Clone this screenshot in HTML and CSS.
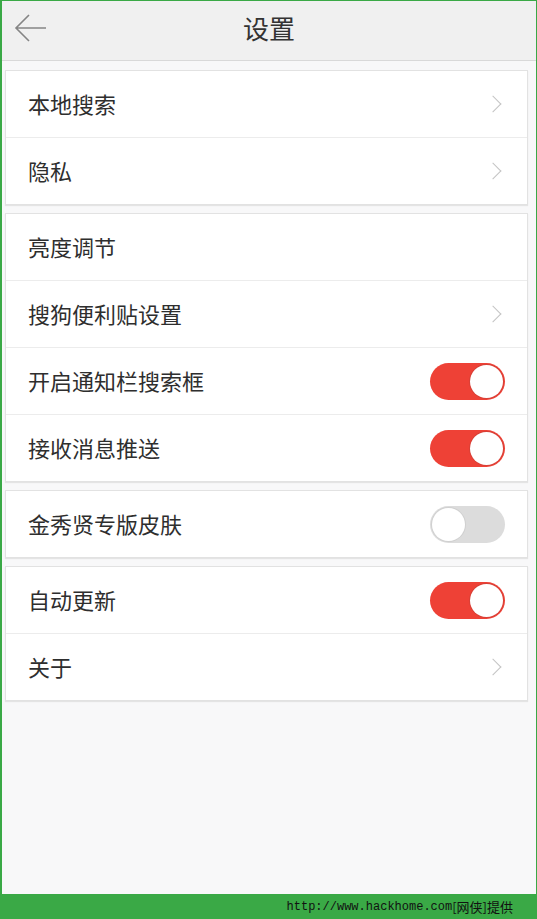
FILE: index.html
```html
<!doctype html>
<html lang="zh">
<head>
    <meta charset="utf-8">
    <meta name="viewport" content="width=device-width, initial-scale=1">
    <title>设置</title>
    <link rel="stylesheet" href="styles.css">
</head>
<body>
    <div class="screen">
        <div class="header">
            <svg class="back" width="34" height="30" viewBox="0 0 34 30">
                <path d="M33 15H3M16 2L3 15l13 13" fill="none" stroke="#858585" stroke-width="1.6"/>
            </svg>
            <h1>设置</h1>
        </div>

        <div class="content">
            <div class="card">
                <div class="row"><span>本地搜索</span><i class="chevron"></i></div>
                <div class="row"><span>隐私</span><i class="chevron"></i></div>
            </div>
            <div class="card">
                <div class="row"><span>亮度调节</span></div>
                <div class="row"><span>搜狗便利贴设置</span><i class="chevron"></i></div>
                <div class="row"><span>开启通知栏搜索框</span><i class="switch on"></i></div>
                <div class="row"><span>接收消息推送</span><i class="switch on"></i></div>
            </div>
            <div class="card">
                <div class="row"><span>金秀贤专版皮肤</span><i class="switch"></i></div>
            </div>
            <div class="card">
                <div class="row"><span>自动更新</span><i class="switch on"></i></div>
                <div class="row"><span>关于</span><i class="chevron"></i></div>
            </div>
        </div>
    </div>
    <div class="footer"><span class="url">http://www.hackhome.com</span><span>[网侠]提供</span></div>
</body>
</html>
```

FILE: styles.css
```css
* {
    margin: 0;
    padding: 0;
    box-sizing: border-box;
}

body {
    width: 537px;
    height: 919px;
    background-color: #3aa946;
    font-family: "Noto Sans CJK SC", "Noto Sans", sans-serif;
    overflow: hidden;
}

.screen {
    height: 894px;
    border: 1px solid #3aa946;
    border-left-width: 2px;
    border-bottom: none;
    background-color: #f8f8f9;
    display: flex;
    flex-direction: column;
}

.header {
    height: 60px;
    flex-shrink: 0;
    display: flex;
    align-items: center;
    position: relative;
    background-color: #f0f0f0;
    border-bottom: 1px solid #d9d9d9;
}

.back {
    margin-left: 11px;
    margin-top: -6px;
}

.header h1 {
    position: absolute;
    left: 0;
    right: 0;
    top: 10px;
    text-align: center;
    font-size: 26px;
    font-weight: normal;
    color: #333;
    line-height: 34px;
}

.content {
    flex: 1;
    padding: 9px 8px 0 3px;
}

.card {
    background-color: #fff;
    border: 1px solid #e2e2e2;
    box-shadow: 0 1px 1px #e4e4e4;
    margin-bottom: 8px;
}

.row {
    height: 67px;
    display: flex;
    align-items: center;
    justify-content: space-between;
    padding: 0 22px 0 22px;
    border-top: 1px solid #ececec;
    font-size: 22px;
    color: #2e2e2e;
}

.row span {
    margin-top: -3px;
}

.row:first-child {
    height: 66px;
    border-top: none;
}

.chevron {
    width: 12px;
    height: 12px;
    border-top: 1.5px solid #c4c4c4;
    border-right: 1.5px solid #c4c4c4;
    transform: rotate(45deg);
    margin-right: 6px;
}

.switch {
    position: relative;
    width: 75px;
    height: 37px;
    border-radius: 19px;
    background-color: #dcdcdc;
}

.switch::after {
    content: "";
    position: absolute;
    top: 2px;
    left: 2px;
    width: 33px;
    height: 33px;
    border-radius: 50%;
    background-color: #fff;
    box-shadow: 0 0 0 1px #d0d0d0;
}

.switch.on {
    background-color: #ee4136;
}

.switch.on::after {
    left: 40px;
    box-shadow: 0 0 0 1px #d84036;
}

.footer {
    height: 25px;
    display: flex;
    align-items: center;
    justify-content: flex-end;
    padding-right: 24px;
    font-family: "Noto Sans CJK SC", sans-serif;
    font-size: 13px;
    line-height: 16px;
    color: #111;
}

.footer .url {
    font-family: "Liberation Mono", monospace;
    font-size: 12px;
}
```
